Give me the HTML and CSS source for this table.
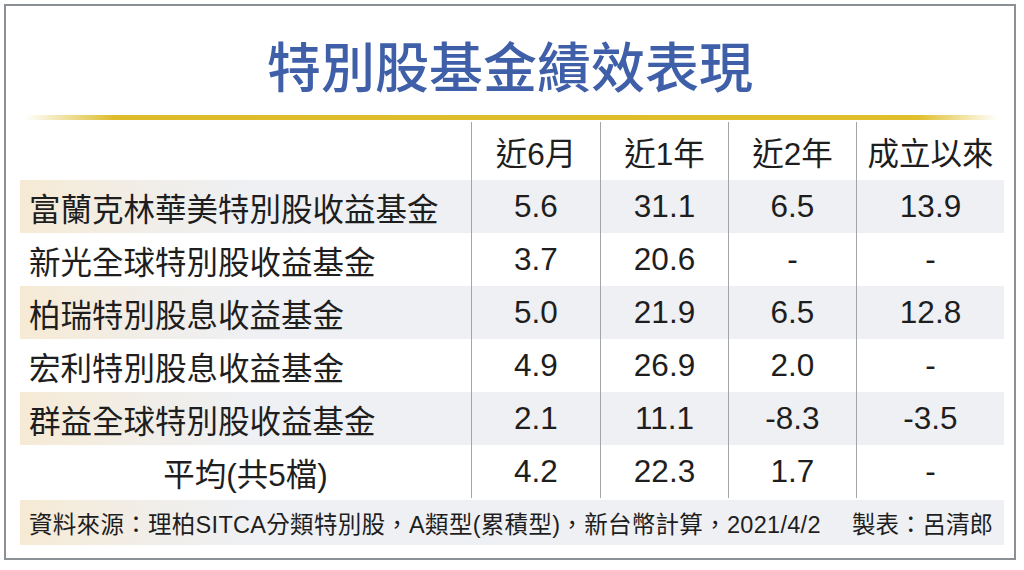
FILE: index.html
```html
<!DOCTYPE html>
<html lang="zh-Hant">
<head>
<meta charset="utf-8">
<title>特別股基金績效表現</title>
<link rel="stylesheet" href="styles.css">
</head>
<body>
<div class="frame">
  <h1 class="title">特別股基金績效表現</h1>
  <div class="rule"></div>
  <div class="table">
    <div class="row head">
      <div class="cell name"></div>
      <div class="cell">近6月</div>
      <div class="cell">近1年</div>
      <div class="cell">近2年</div>
      <div class="cell">成立以來</div>
    </div>
    <div class="row shaded">
      <div class="cell name">富蘭克林華美特別股收益基金</div>
      <div class="cell">5.6</div>
      <div class="cell">31.1</div>
      <div class="cell">6.5</div>
      <div class="cell">13.9</div>
    </div>
    <div class="row">
      <div class="cell name">新光全球特別股收益基金</div>
      <div class="cell">3.7</div>
      <div class="cell">20.6</div>
      <div class="cell">-</div>
      <div class="cell">-</div>
    </div>
    <div class="row shaded">
      <div class="cell name">柏瑞特別股息收益基金</div>
      <div class="cell">5.0</div>
      <div class="cell">21.9</div>
      <div class="cell">6.5</div>
      <div class="cell">12.8</div>
    </div>
    <div class="row">
      <div class="cell name">宏利特別股息收益基金</div>
      <div class="cell">4.9</div>
      <div class="cell">26.9</div>
      <div class="cell">2.0</div>
      <div class="cell">-</div>
    </div>
    <div class="row shaded">
      <div class="cell name">群益全球特別股收益基金</div>
      <div class="cell">2.1</div>
      <div class="cell">11.1</div>
      <div class="cell">-8.3</div>
      <div class="cell">-3.5</div>
    </div>
    <div class="row">
      <div class="cell name avg">平均(共5檔)</div>
      <div class="cell">4.2</div>
      <div class="cell">22.3</div>
      <div class="cell">1.7</div>
      <div class="cell">-</div>
    </div>
  </div>
  <div class="footer shaded">
    <span class="source">資料來源：理柏SITCA分類特別股，A類型(累積型)，新台幣計算，2021/4/2</span>
    <span>製表：呂清郎</span>
  </div>
</div>
</body>
</html>
```
FILE: styles.css
```css
html, body {
  margin: 0;
  padding: 0;
  background: #ffffff;
}

body {
  font-family: "Liberation Sans", "Noto Sans CJK TC", sans-serif;
  color: #1e1e1e;
}

.frame {
  box-sizing: border-box;
  width: 1012px;
  height: 556px;
  margin: 4px 0 0 4px;
  border: 2px solid #8b9097;
  display: flex;
  flex-direction: column;
}

.title {
  margin: 32px 0 0 0;
  font-family: "Noto Sans CJK TC", sans-serif;
  font-size: 54px;
  line-height: 54px;
  font-weight: 500;
  color: #3f5fa9;
  text-align: center;
}

.rule {
  height: 5px;
  margin: 23px 16px 0 19px;
  border-radius: 3px;
  background: linear-gradient(to right,
    rgba(222, 188, 40, 0) 0,
    #ddbb29 90px,
    #e0bf2b calc(100% - 80px),
    rgba(222, 188, 40, 0) 100%);
}

.table {
  margin: 2px 0 0 14px;
  width: 984px;
  display: flex;
  flex-direction: column;
}

.row {
  display: grid;
  grid-template-columns: 451px 129px 128px 128px 148px;
  height: 53px;
  font-size: 31.5px;
}

.row.head {
  height: 58px;
}

.shaded {
  background: linear-gradient(to right, #f6ead4 0, #f1eee9 130px, #eef0f3 230px);
}

.cell {
  display: flex;
  align-items: center;
  justify-content: center;
  border-left: 1px solid #a3a5a8;
  white-space: nowrap;
}

.cell.name {
  border-left: none;
  justify-content: flex-start;
  padding-left: 9px;
}

.cell.name.avg {
  justify-content: center;
  padding-left: 0;
}

.footer {
  margin: 2px 0 0 14px;
  width: 984px;
  height: 45px;
  box-sizing: border-box;
  padding: 0 11px 0 9px;
  display: flex;
  align-items: center;
  justify-content: space-between;
  font-size: 23.5px;
  white-space: nowrap;
}

.source {
  letter-spacing: 0.3px;
}
```
